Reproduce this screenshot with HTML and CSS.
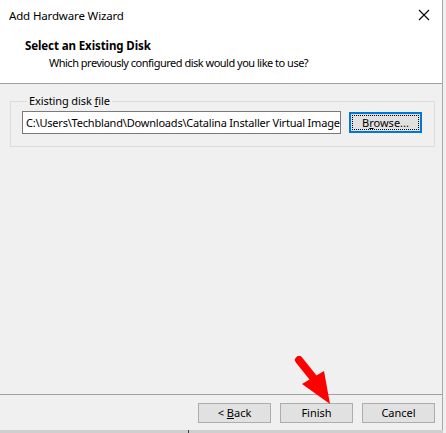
FILE: index.html
```html
<!DOCTYPE html>
<html>
<head>
<meta charset="utf-8">
<link rel="stylesheet" href="styles.css">
</head>
<body>
<div class="screen">
  <div class="window">
    <div class="header">
      <div class="titlebar">
        <span class="title">Add Hardware Wizard</span>
        <svg class="close" width="12" height="12" viewBox="0 0 12 12"><path d="M1 1 L11 11 M11 1 L1 11" stroke="#000" stroke-width="1.1" fill="none"/></svg>
      </div>
      <div class="heading">Select an Existing Disk</div>
      <div class="subheading">Which previously configured disk would you like to use?</div>
    </div>
    <div class="body">
      <fieldset class="group">
        <legend class="legend">Existing disk <u>f</u>ile</legend>
        <div class="row">
          <div class="input">C:\Users\Techbland\Downloads\Catalina Installer Virtual Image by Techbland.vmdk</div>
          <div class="browse"><span class="focus">B<u>r</u>owse...</span></div>
        </div>
      </fieldset>
    </div>
    <div class="footer">
      <div class="btn">&lt; <u>B</u>ack</div>
      <div class="btn">Finish</div>
      <div class="btn">Cancel</div>
    </div>
  </div>
  <div class="shadow"><span class="tick"></span></div>
  <svg class="arrow" width="60" height="60" viewBox="0 0 60 60">
    <path d="M5 4 L21 24" stroke="#ff0000" stroke-width="8" stroke-linecap="round" fill="none"/>
    <path d="M36 48 L30 15 L8 28 Z" fill="#ff0000"/>
  </svg>
</div>
</body>
</html>
```
FILE: styles.css
```css
* { box-sizing: border-box; }
html, body { margin: 0; padding: 0; }
body {
  width: 446px;
  height: 433px;
  overflow: hidden;
  background: #f0f0f0;
  font-family: "Noto Sans", "Open Sans", sans-serif;
  font-size: 11px;
  color: #000;
}
.screen { position: relative; width: 446px; height: 433px; }
.window {
  width: 443px;
  height: 430px;
  background: #f0f0f0;
  border-right: 1px solid #a8a8a8;
  display: flex;
  flex-direction: column;
}
.header {
  background: #fff;
  height: 84px;
  border-bottom: 1px solid #a0a0a0;
  flex: none;
}
.titlebar {
  height: 30px;
  display: flex;
  align-items: center;
  justify-content: space-between;
  padding: 0 9px 0 9px;
}
.title { font-size: 11.5px; letter-spacing: -0.15px; }
.close { margin-right: 3px; }
.heading {
  font-weight: bold;
  font-size: 11.5px;
  padding-left: 25px;
  margin-top: 7px;
  line-height: 17px;
  letter-spacing: -0.1px;
}
.subheading {
  padding-left: 49px;
  line-height: 17px;
  letter-spacing: -0.5px;
}
.body { flex: 1; padding: 10px 10px 0 10px; }
.group {
  margin: 0;
  border: 1px solid #dcdcdc;
  padding: 3px 12px 11px 11px;
  height: 53px;
}
.legend { padding: 0 2px; margin-left: 5px; line-height: 14px; letter-spacing: -0.1px; }
.row { display: flex; align-items: center; gap: 8px; }
.input {
  width: 319px;
  height: 23px;
  background: #fff;
  border: 1px solid #7a7a7a;
  padding: 0 3px;
  white-space: nowrap;
  overflow: hidden;
  line-height: 21px;
  letter-spacing: -0.2px;
}
.browse {
  width: 73px;
  height: 21px;
  border: 2px solid #0078d7;
  background: #e1e1e1;
  padding: 1px;
  display: flex;
}
.focus {
  flex: 1;
  border: 1px dotted #000;
  text-align: center;
  line-height: 13px;
}
.footer {
  flex: none;
  height: 36px;
  border-top: 1px solid #a0a0a0;
  display: flex;
  justify-content: flex-end;
  gap: 9px;
  padding: 8px 7px 0 0;
}
.btn {
  width: 73px;
  height: 20px;
  background: #e1e1e1;
  border: 1px solid #adadad;
  text-align: center;
  line-height: 18px;
}
.shadow {
  height: 3px;
  width: 443px;
  background: #cfcfcf;
  position: relative;
}
.tick { position: absolute; left: 188px; top: 0; width: 1px; height: 3px; background: #404040; }
.arrow { position: absolute; left: 294px; top: 356px; }
```
